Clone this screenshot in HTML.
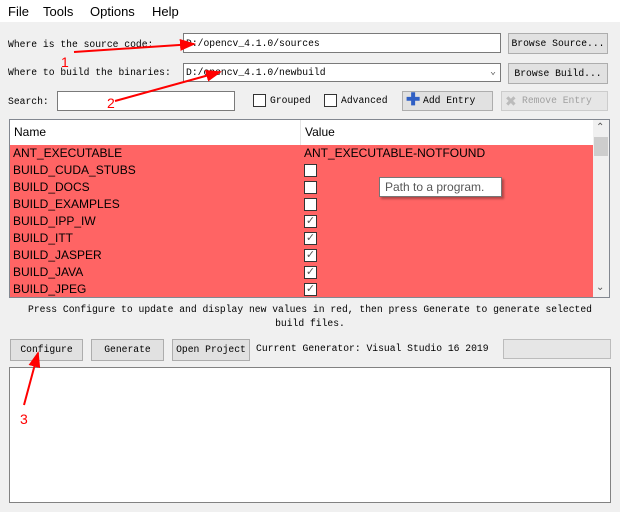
<!DOCTYPE html>
<html><head><meta charset="utf-8"><style>
*{box-sizing:border-box;margin:0;padding:0}
body{width:620px;height:512px;background:#f0f0f0;position:relative;overflow:hidden;font-family:"Liberation Mono","Noto Sans CJK SC",monospace;font-size:9.7px;color:#000}
.a{position:absolute}
.menu{left:0;top:0;width:620px;height:22px;background:#fff;font-family:"Liberation Sans",sans-serif;font-size:13px}
.menu span{position:absolute;top:4px}
.tb{position:absolute;background:#fff;border:1px solid #7a7a7a;padding:4px 2px 0;white-space:nowrap}
.btn{position:absolute;background:#e1e1e1;border:1px solid #adadad;text-align:center;white-space:nowrap}
.cb{position:absolute;width:13px;height:13px;border:1px solid #333;background:#fff}
.sans{font-family:"Liberation Sans",sans-serif;font-size:12px}
.row{position:absolute;left:10px;width:583px;height:17px;background:#ff6464;font-family:"Liberation Sans",sans-serif;font-size:12px}
.row .n{position:absolute;left:3px;top:1px}
.row .v{position:absolute;left:294px;top:1px}
.row .c{position:absolute;left:294px;top:2px;width:13px;height:13px;border:1px solid #333;background:#fff;font-size:11px;line-height:11px;text-align:center;color:#555}
</style></head><body>
<div class="a menu"><span style="left:8px">File</span><span style="left:43px">Tools</span><span style="left:90px">Options</span><span style="left:152px">Help</span></div>

<div class="a" style="left:8px;top:39px">Where is the source code:</div>
<div class="tb" style="left:183px;top:33px;width:318px;height:20px">D:/opencv_4.1.0/sources</div>
<div class="btn" style="left:508px;top:33px;width:100px;height:21px;line-height:19px">Browse Source...</div>

<div class="a" style="left:8px;top:67px">Where to build the binaries:</div>
<div class="tb" style="left:183px;top:63px;width:318px;height:19px;padding-top:3px">D:/opencv_4.1.0/newbuild<span style="position:absolute;right:4px;top:2px;color:#555">⌄</span></div>
<div class="btn" style="left:508px;top:63px;width:100px;height:21px;line-height:19px">Browse Build...</div>

<div class="a" style="left:8px;top:96px">Search:</div>
<div class="tb" style="left:57px;top:91px;width:178px;height:20px"></div>
<div class="cb" style="left:253px;top:94px"></div><div class="a" style="left:270px;top:95px">Grouped</div>
<div class="cb" style="left:324px;top:94px"></div><div class="a" style="left:341px;top:95px">Advanced</div>
<div class="btn" style="left:402px;top:91px;width:91px;height:20px;line-height:18px;text-align:left;padding-left:20px"><span style="position:absolute;left:3px;top:-1px;color:#2f5fc4;font-size:17px;font-weight:bold;font-family:'Liberation Sans',sans-serif">✚</span>Add Entry</div>
<div class="btn" style="left:501px;top:91px;width:107px;height:20px;line-height:18px;color:#a0a0a0;background:#e6e6e6;border-color:#ccc;text-align:left;padding-left:20px"><span style="position:absolute;left:3px;top:0;color:#bbb;font-size:14px;font-family:'Liberation Sans',sans-serif">✖</span>Remove Entry</div>

<div class="a" style="left:9px;top:119px;width:601px;height:179px;border:1px solid #828790;background:#fff"></div>
<div class="a sans" style="left:10px;top:120px;width:583px;height:25px;background:#fff"><span style="position:absolute;left:4px;top:5px">Name</span><span style="position:absolute;left:290px;top:0;width:1px;height:25px;background:#e5e5e5"></span><span style="position:absolute;left:295px;top:5px">Value</span></div>
<div class="a" style="left:593px;top:120px;width:16px;height:177px;background:#f0f0f0"></div>
<div class="a" style="left:596px;top:122px;font-size:10px;color:#555;font-family:'Liberation Sans',sans-serif">⌃</div>
<div class="a" style="left:594px;top:137px;width:14px;height:19px;background:#cdcdcd"></div>
<div class="a" style="left:596px;top:282px;font-size:10px;color:#555;font-family:'Liberation Sans',sans-serif">⌄</div>

<div class="row" style="top:145px"><span class="n">ANT_EXECUTABLE</span><span class="v">ANT_EXECUTABLE-NOTFOUND</span></div>
<div class="row" style="top:162px"><span class="n">BUILD_CUDA_STUBS</span><span class="c"></span></div>
<div class="row" style="top:179px"><span class="n">BUILD_DOCS</span><span class="c"></span></div>
<div class="row" style="top:196px"><span class="n">BUILD_EXAMPLES</span><span class="c"></span></div>
<div class="row" style="top:213px"><span class="n">BUILD_IPP_IW</span><span class="c">✓</span></div>
<div class="row" style="top:230px"><span class="n">BUILD_ITT</span><span class="c">✓</span></div>
<div class="row" style="top:247px"><span class="n">BUILD_JASPER</span><span class="c">✓</span></div>
<div class="row" style="top:264px"><span class="n">BUILD_JAVA</span><span class="c">✓</span></div>
<div class="row" style="top:281px;height:16px"><span class="n">BUILD_JPEG</span><span class="c">✓</span></div>

<div class="a sans" style="left:379px;top:177px;width:123px;height:20px;background:#fff;border:1px solid #767676;box-shadow:2px 2px 2px rgba(0,0,0,.3);padding:2px 5px;font-size:12px;color:#575757">Path to a program.</div>

<div class="a" style="left:0;top:303px;width:620px;text-align:center;line-height:14px">Press Configure to update and display new values in red, then press Generate to generate selected<br>build files.</div>

<div class="btn" style="left:10px;top:339px;width:73px;height:22px;line-height:20px">Configure</div>
<div class="btn" style="left:91px;top:339px;width:73px;height:22px;line-height:20px">Generate</div>
<div class="btn" style="left:172px;top:339px;width:78px;height:22px;line-height:20px">Open Project</div>
<div class="a" style="left:256px;top:343px">Current Generator: Visual Studio 16 2019</div>
<div class="a" style="left:503px;top:339px;width:108px;height:20px;background:#e6e6e6;border:1px solid #bcbcbc"></div>

<div class="a" style="left:9px;top:367px;width:602px;height:136px;background:#fff;border:1px solid #828282"></div>

<svg class="a" style="left:0;top:0" width="620" height="512">
<defs><marker id="h" markerWidth="8" markerHeight="6" refX="7" refY="3" orient="auto"><path d="M0,0 L8,3 L0,6 Z" fill="#f00"/></marker></defs>
<g stroke="#f00" stroke-width="2" fill="none" marker-end="url(#h)">
<line x1="74" y1="52" x2="194" y2="44"/>
<line x1="115" y1="101" x2="220" y2="72"/>
<line x1="24" y1="405" x2="38" y2="353"/>
</g>
<g fill="#f00" font-family="Liberation Sans,sans-serif" font-size="14">
<text x="61" y="67">1</text><text x="107" y="108">2</text><text x="20" y="424">3</text>
</g>
</svg>
</body></html>
